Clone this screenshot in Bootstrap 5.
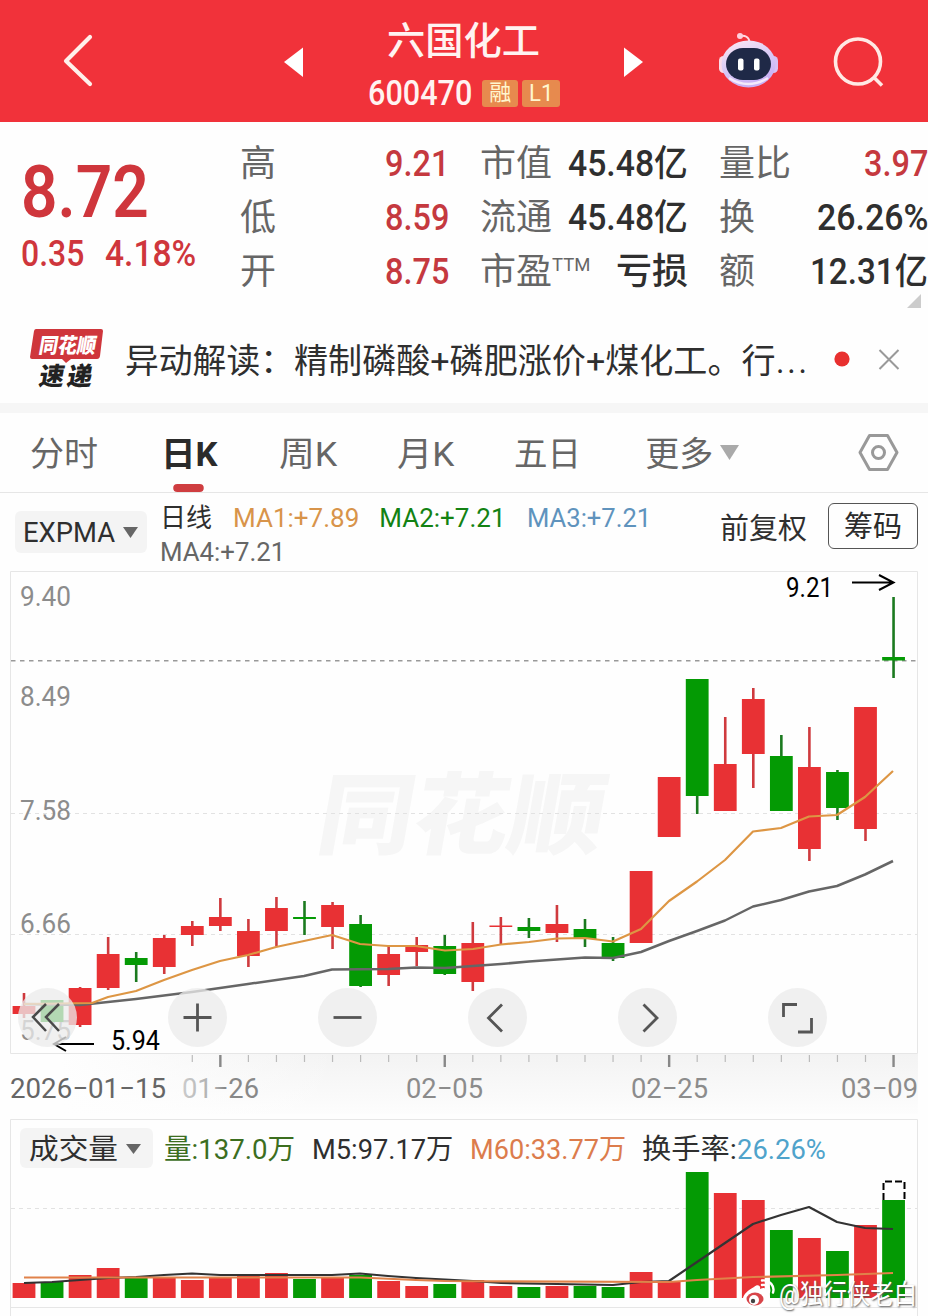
<!DOCTYPE html>
<html lang="zh-CN">
<head>
<meta charset="utf-8">
<meta name="viewport" content="width=device-width, initial-scale=1">
<title>六国化工 600470</title>
<link href="https://cdn.jsdelivr.net/npm/bootstrap@5.3.0/dist/css/bootstrap.min.css" rel="stylesheet">
<style>
body{width:928px;height:1316px;overflow:hidden;background:#fefefe;color:#2f2f2f;font-family:Roboto,"Noto Sans CJK SC",sans-serif;line-height:1}
svg{display:block;flex:none}
[data-w]{display:inline-block;white-space:nowrap;transform-origin:0 50%;flex:none}
.topbar{height:122px;background:#f1323a;color:#fff3f1}
.topbar>*{flex:none}
.ttl{width:250px;padding-top:21px}
.ttl h1{font-size:38px;line-height:40px;font-weight:500;margin:0 0 0 47px}
.code-row{height:30px;margin:17px 0 0 28px}
.code-num{font-size:35px;font-weight:500;margin-right:10px}
.tagbox{background:#e78a4e;color:#fff6cf;height:27px;border-radius:3px;font-size:22px}
.tag-rong{width:36px}
.tag-l1{width:38px;font-size:24px}
.quote{height:185px}
.price-col{width:240px;padding:37px 0 0 21px;color:#cf363c}
.price{font-size:73px;font-weight:600;line-height:66px;height:66px}
.chg{font-size:36.5px;font-weight:500;margin-top:10px;line-height:38px;gap:21px}
.stat{height:54px;line-height:54px;font-size:36px;color:#666}
.stat b{font-weight:500;color:#2f2f2f}
.stat b.up{color:#c5393f}
.s1{width:209px}.s2{width:208px}.s3{width:209px}
.stats{gap:31px;padding-top:15px}
.stat sup{font-size:18.5px;top:-13px;font-weight:400}
.fold{right:7px;bottom:-1px}
.notice{height:96px;padding-left:30px}
.notice .msg{font-size:34px;line-height:96px;margin-left:21px;padding-top:6px}
.notice .dots{letter-spacing:3px}
.sep{height:10px;background:#f6f6f6}
.tabs-row{height:80px;border-bottom:1px solid #e6e6e6;font-size:34px;color:#666;line-height:82px}
.tabs-row>*{flex:none}
.tabs-row .on{color:#2b2b2b;font-weight:700;position:relative;height:79px}
.tabs-row .on::after{content:"";position:absolute;left:12px;bottom:0;width:30px;height:8px;border-radius:4px;background:#cf3d40}
.ind{height:72px}
.drop{background:#f4f4f4;border-radius:6px}
.ind .drop{width:132px;height:42px;margin:18px 0 0 15px;padding:2px 0 0 8px;font-size:28px}
.legend{width:560px;margin-left:13px;font-size:26px;padding-top:8px}
.legend>div{height:34px;line-height:34px}
.m1{color:#d8944a;margin-left:21px}.m2{color:#138213;margin-left:20px}.m3{color:#5f93bd;margin-left:21px}
.adj{font-size:29px;line-height:73px}
.chip{width:90px;height:46px;margin:10px 0 0 21px;padding-top:3px;border:1.5px solid #555;border-radius:6px;font-size:29px;color:#2b2b2b}
.stage{height:751px}
.ctrls{position:absolute;left:18px;top:423px;gap:91px}
.ctrls button{width:59px;height:59px;border:0;border-radius:50%;background:rgba(235,235,235,.76);padding:0}
.volhead{position:absolute;left:20px;top:563px;height:40px;font-size:28px}
.volhead>span{padding-top:3px}
.volhead .drop{width:133px;height:40px;padding:3px 0 0 9px;margin-right:11px}
.wm{position:absolute;left:741px;top:714px;color:#fff;font-size:27px;text-shadow:1px 1px 2px #555}
svg text{font-family:Roboto,"Noto Sans CJK SC",sans-serif}
</style>
</head>
<body>
<header class="topbar d-flex">
  <svg width="270" height="122" fill="none" stroke="#fff0ea" stroke-width="4.2" stroke-linecap="round" stroke-linejoin="round"><path d="M90 37 66 61 90 84"/></svg>
  <svg width="70" height="122"><path d="M14 62 33 47.500V77z" fill="#fff"/></svg>
  <div class="ttl">
    <h1><span data-w="153">六国化工</span></h1>
    <div class="code-row d-flex align-items-center">
      <span class="code-num" data-w="104">600470</span>
      <span class="tagbox tag-rong d-flex align-items-center justify-content-center me-1">融</span>
      <span class="tagbox tag-l1 d-flex align-items-center justify-content-center"><span data-w="24">L1</span></span>
    </div>
  </div>
  <svg width="110" height="122"><path d="M53 62 34 47.500V77z" fill="#fff"/></svg>
  <svg width="110" height="122" viewBox="700 0 110 122">
    <defs><linearGradient id="rb" x1="0" y1="0" x2=".4" y2="1"><stop offset="0" stop-color="#ffe9f3"/><stop offset=".55" stop-color="#d9cbf6"/><stop offset="1" stop-color="#c9b0f5"/></linearGradient></defs>
    <path d="M740 36c5-1 9 1 9.500 6" fill="none" stroke="#ffd9e3" stroke-width="2"/><circle cx="740" cy="36" r="3" fill="#ffcfdc"/>
    <rect x="719" y="56" width="9" height="17" rx="4.500" fill="#fbdbe8"/><rect x="769" y="56" width="9" height="17" rx="4.500" fill="#d9c1f3"/>
    <ellipse cx="748.500" cy="64" rx="27" ry="23.500" fill="url(#rb)"/>
    <path d="M729 78q19 12 39 0" stroke="#f3e9fb" stroke-width="2.500" fill="none"/>
    <rect x="726" y="48" width="45" height="32" rx="17" fill="#1f2947"/>
    <rect x="738" y="58.500" width="5.500" height="12" rx="2" fill="#fff"/><rect x="754" y="58.500" width="5.500" height="12" rx="2" fill="#fff"/>
  </svg>
  <svg width="118" height="122" viewBox="810 0 118 122" fill="none" stroke="#ffe9e4" stroke-width="3.600"><circle cx="858" cy="61.500" r="22.500"/><path d="m873.500 77 8.500 8.500"/></svg>
</header>

<section class="quote d-flex">
  <div class="price-col flex-shrink-0">
    <div class="price"><span data-w="128">8.72</span></div>
    <div class="chg d-flex"><span data-w="63">0.35</span><span data-w="91">4.18%</span></div>
  </div>
  <div class="stats d-flex flex-shrink-0">
    <div class="s1">
      <div class="stat d-flex justify-content-between"><span>高</span><b class="up" data-w="64">9.21</b></div>
      <div class="stat d-flex justify-content-between"><span>低</span><b class="up" data-w="64">8.59</b></div>
      <div class="stat d-flex justify-content-between"><span>开</span><b class="up" data-w="64">8.75</b></div>
    </div>
    <div class="s2">
      <div class="stat d-flex justify-content-between"><span>市值</span><b data-w="120">45.48亿</b></div>
      <div class="stat d-flex justify-content-between"><span>流通</span><b data-w="120">45.48亿</b></div>
      <div class="stat d-flex justify-content-between"><span>市盈<sup data-w="38">TTM</sup></span><b>亏损</b></div>
    </div>
    <div class="s3 position-relative">
      <div class="stat d-flex justify-content-between"><span>量比</span><b class="up" data-w="64">3.97</b></div>
      <div class="stat d-flex justify-content-between"><span>换</span><b data-w="111">26.26%</b></div>
      <div class="stat d-flex justify-content-between"><span>额</span><b data-w="118">12.31亿</b></div>
      <svg class="position-absolute fold" width="14" height="14" viewBox="0 0 14 14"><path d="M14 0v14H0z" fill="#ccc"/></svg>
    </div>
  </div>
</section>

<section class="notice d-flex">
  <svg width="74" height="96" viewBox="30 307 74 96">
    <path d="M36 329h65q2 0 2 2l-3 25q-.5 3-3 3H71l-5 4-4-4H32q-2 0-2-2l4-26q.5-2 2-2z" fill="#cf363c"/>
    <text transform="translate(38 353) skewX(-10)" font-size="21" font-weight="900" fill="#fff" textLength="57" lengthAdjust="spacingAndGlyphs">同花顺</text>
    <text transform="translate(38 385) skewX(-10)" font-size="25" font-weight="900" fill="#222" textLength="53">速递</text>
  </svg>
  <div class="msg d-flex"><span data-w="169">异动解读：</span><span data-w="482">精制磷酸+磷肥涨价+煤化工。行</span><span class="dots" data-w="34">...</span></div>
  <svg width="110" height="96" viewBox="810 307 110 96"><circle cx="842" cy="359" r="7.600" fill="#e8302f"/><path d="m879.500 350 19 19m0-19-19 19" stroke="#999" stroke-width="2"/></svg>
</section>
<div class="sep"></div>

<nav class="tabs-row d-flex">
  <span data-w="68" style="margin-left:30px">分时</span>
  <span class="on" style="margin-left:63px" data-w="57">日K</span>
  <span style="margin-left:61px" data-w="58">周K</span>
  <span style="margin-left:60px" data-w="57">月K</span>
  <span style="margin-left:60px" data-w="67">五日</span>
  <span style="margin-left:64px" data-w="68">更多</span>
  <svg width="206" height="79" viewBox="713 413 206 79"><path d="M720 445h19l-9.500 15z" fill="#aaa"/><g fill="none" stroke="#999" stroke-width="3"><path d="M869.500 435.500h18l9.500 17-9.500 17h-18l-9.500-17z" stroke-linejoin="round"/><circle cx="878.500" cy="452.500" r="6"/></g></svg>
</nav>

<section class="ind d-flex">
  <div class="drop d-flex align-items-center flex-shrink-0"><span data-w="92">EXPMA</span><svg class="ms-2" width="16" height="12"><path d="M0 0h15L7.500 11z" fill="#666"/></svg></div>
  <div class="legend flex-shrink-0">
    <div class="d-flex"><span data-w="52">日线</span><span class="m1" data-w="126">MA1:+7.89</span><span class="m2" data-w="126">MA2:+7.21</span><span class="m3" data-w="124">MA3:+7.21</span></div>
    <div style="color:#666"><span data-w="125">MA4:+7.21</span></div>
  </div>
  <div class="adj"><span data-w="87">前复权</span></div>
  <div class="chip d-flex align-items-center justify-content-center flex-shrink-0">筹码</div>
</section>

<main class="stage position-relative">
  <svg id="chart" width="928" height="751" viewBox="0 565 928 751">
    <defs>
      <linearGradient id="axis" x1="0" y1="0" x2="0" y2="1"><stop offset="0" stop-color="#f3f3f3"/><stop offset="1" stop-color="#fdfdfd"/></linearGradient>
      <linearGradient id="veil"><stop offset="0" stop-color="#fefefe"/><stop offset="1" stop-color="#fefefe" stop-opacity="0"/></linearGradient>
      <linearGradient id="fade"><stop offset="0" stop-color="#ccc"/><stop offset=".45" stop-color="#aaa"/><stop offset=".55" stop-color="#888"/></linearGradient>
    </defs>
    <rect x="60" y="1054" width="858" height="60" fill="url(#axis)"/>
    <rect x="60" y="1054" width="280" height="60" fill="url(#veil)"/>
    <path d="M10.500 1053.500v-482h907v482zM10.500 1316V1119.500h907V1316M10.500 1307.500h907" fill="none" stroke="#e6e6e6"/>
    <text transform="translate(314 847) skewX(-10)" font-size="89" font-weight="900" fill="#f6f6f6" textLength="286" lengthAdjust="spacingAndGlyphs">同花顺</text>
    <path d="M11 813.500h906M11 934.500h906M11 1208.500h906" stroke="#e2e2e2" stroke-dasharray="4 4"/>
    <path d="M11 660.800h906" stroke="#999" stroke-width="1.500" stroke-dasharray="4.500 4.500"/>
    <g font-size="28" fill="#8c8c8c">
      <text x="20" y="606" textLength="51" lengthAdjust="spacingAndGlyphs">9.40</text>
      <text x="20" y="706" textLength="51" lengthAdjust="spacingAndGlyphs">8.49</text>
      <text x="20" y="820" textLength="51" lengthAdjust="spacingAndGlyphs">7.58</text>
      <text x="20" y="933" textLength="51" lengthAdjust="spacingAndGlyphs">6.66</text>
      <text x="20" y="1040" textLength="51" lengthAdjust="spacingAndGlyphs">5.75</text>
      <text x="406" y="1097.500" textLength="77" lengthAdjust="spacingAndGlyphs">02−05</text>
      <text x="631" y="1097.500" textLength="77" lengthAdjust="spacingAndGlyphs">02−25</text>
      <text x="841" y="1097.500" textLength="77" lengthAdjust="spacingAndGlyphs">03−09</text>
      <text x="182" y="1097.500" textLength="77" lengthAdjust="spacingAndGlyphs" fill="url(#fade)">01−26</text>
      <text x="10" y="1097.500" textLength="156" lengthAdjust="spacingAndGlyphs" fill="#666">2026−01−15</text>
    </g>
    <g id="bars"></g>
    <g fill="none" stroke-width="2.200" stroke-linejoin="round">
      <path stroke="#666" stroke-width="2.500" d="M24 1004 80 1005 136 999 192 992 248 984 304 976 332 969.500 388 969 416 967.500 445 968 473 966 501 964 529 961.500 585 957.500 613 958 641 952 669 941 697 931 725 920.500 753 906.500 781 900 809 891.500 837 886 865 874.500 893 861"/>
      <path stroke="#dd9644" d="M24 1004 92 1003 108 997 136 991 164 980 192 970 220 961 248 955 276 947 304 941 332 935 360 944 388 946 416 946 445 950.500 473 949 501 944.500 529 942 557 938.500 585 938 613 941.500 641 929 669 901 697 881.500 725 860 753 831.500 781 828 809 816.500 837 815 865 797 893 771"/>
      <path stroke="#333" d="M24 1283 52 1282 80 1280 108 1278 136 1277 164 1275 192 1273.500 220 1275 276 1275 332 1275 360 1273.500 388 1276 416 1278 445 1279.500 473 1281 501 1283 557 1284 613 1285 641 1282 669 1281 697 1262 725 1243 753 1224 781 1215 809 1207 837 1222 865 1228 893 1229"/>
      <path stroke="#e0824a" d="M24 1277.500H360L416 1280 445 1281 669 1282 697 1280 753 1277 837 1275 893 1273"/>
    </g>
    <path d="M852 582.500h41M879 575l14.500 7.500L879 590M94 1044H54M66 1037l-12 7 12 7" fill="none" stroke="#000" stroke-width="2"/>
    <g font-size="27" fill="#000"><text x="786" y="597" textLength="47" lengthAdjust="spacingAndGlyphs">9.21</text><text x="111" y="1050" textLength="49" lengthAdjust="spacingAndGlyphs">5.94</text></g>
    <path d="M883.500 1200v-18.500h21V1200" fill="none" stroke="#000" stroke-width="2" stroke-dasharray="7 3"/>
  </svg>

  <div class="ctrls d-flex">
    <button><svg width="59" height="59" fill="none" stroke="#4a4a4a" stroke-width="2.500"><path d="M28 16 15 29 28 43M41 16 28 29 41 43"/></svg></button>
    <button><svg width="59" height="59" stroke="#555" stroke-width="2.800"><path d="M15.500 29.500h28M29.500 15.500v28"/></svg></button>
    <button><svg width="59" height="59" stroke="#555" stroke-width="2.800"><path d="M15.500 29.500h28"/></svg></button>
    <button><svg width="59" height="59" fill="none" stroke="#555" stroke-width="2.800"><path d="M34 16.500 20.500 30 34 43.500"/></svg></button>
    <button><svg width="59" height="59" fill="none" stroke="#555" stroke-width="2.800"><path d="M25.500 16.500 39 30 25.500 43.500"/></svg></button>
    <button><svg width="59" height="59" fill="none" stroke="#555" stroke-width="2.800"><path d="M29 16.500H15.500V29M43.500 30v14H30"/></svg></button>
  </div>

  <div class="volhead d-flex align-items-center">
    <div class="drop d-flex align-items-center"><span data-w="89">成交量</span><svg style="margin-left:8px" width="16" height="11"><path d="M0 0h15L7.500 10z" fill="#666"/></svg></div>
    <span data-w="131" style="color:#3c6e1f">量:137.0万</span>
    <span data-w="141" style="margin-left:17px">M5:97.17万</span>
    <span data-w="156" style="color:#dc7c4c;margin-left:17px">M60:33.77万</span>
    <span data-w="95" style="margin-left:16px">换手率:</span><span data-w="89" style="color:#4fa3cb">26.26%</span>
  </div>

  <div class="wm d-flex align-items-center">
    <svg width="34" height="32" viewBox="0 0 34 32"><path d="M13 8c3-3 7-2 6 2 4-2 7-1 6 3 8 4 4 15-9 16C6 30 0 25 2 19c1-4 5-8 11-11z" fill="#fff"/><ellipse cx="14" cy="20" rx="8.500" ry="6.500" fill="#d8454a"/><circle cx="13" cy="21" r="5" fill="#fff"/><circle cx="12" cy="22" r="2.200" fill="#444"/><path d="M21 6c5-1 8 3 7 7M21 1.500c8-1 13 6 11 12" fill="none" stroke="#fff" stroke-width="2.400" stroke-linecap="round"/></svg>
    <span class="ms-1" data-w="138">@独行侠老白</span>
  </div>
</main>

<script src="https://cdn.jsdelivr.net/npm/bootstrap@5.3.0/dist/js/bootstrap.bundle.min.js"></script>
<script>
// One row per trading day: colour, body top, body bottom, wick top, wick bottom, volume bar top
const days=[
['r',1006,1014,993,1018,1283],['g',1000,1022,1000,1022,1282],['r',988,1025,987,1027,1275],['r',954,988,937,990,1268],
['g',958,965,952,982,1278],['r',938,967,935,974,1278],['r',926,935,921,946,1280],['r',917,926,898,931,1278],
['r',931,956,919,967,1274],['r',908,931,897,946,1273],['g',917,919,901,935,1279],['r',905,927,902,949,1278],
['g',924,986,915,987,1275],['r',954,975,946,986,1281],['r',945,952,937,966,1286],['g',946,974,935,975,1284],
['r',943,982,922,991,1280],['r',925.5,927,917,944,1286],['g',927,931,918,938,1287],['r',924,933,905,942,1286],
['g',929,939,919,947,1286],['g',943,958,937,961,1287],['r',871,943,871,943,1272],['r',777,837,777,837,1282],
['g',679,796,679,814,1172],['r',764,811,717,811,1193],['r',699,754,688,788,1200],['g',756,811,735,811,1230],
['r',767,849,727,861,1238],['g',772,808,770,820,1251],['r',707,829,707,841,1225],['g',657,660.5,597,678,1200]];
let out='';
days.forEach((d,i)=>{
  const x=24+28.05*i,c=d[0]=='r'?'#e83134':'#049a04',w=d[0]=='r'?'#cf3a3e':'#1b7a1f';
  out+=`<path d="M${x} ${d[3]}V${d[4]}" stroke="${w}" stroke-width="2.6"/>`+
    `<rect x="${x-11.4}" y="${d[1]}" width="22.8" height="${d[2]-d[1]}" fill="${c}"/>`+
    `<rect x="${x-11.4}" y="${d[5]}" width="22.8" height="${1298-d[5]}" fill="${c}"/>`;
  if(i>5){const big=[7,15,23,31].includes(i);
    out+=`<path d="M${x} 1055v${big?12:7}" stroke="${big?'#888':'#bbb'}" stroke-width="${big?2.4:1.2}"/>`;}
});
document.getElementById('bars').innerHTML=out;
// Condense each label to its column width
document.querySelectorAll('[data-w]').forEach(e=>{
  const n=e.offsetWidth,w=+e.dataset.w;
  e.style.transform=`scaleX(${w/n})`;
  e.style.marginRight=(parseFloat(getComputedStyle(e).marginRight)+w-n)+'px';
});
</script>
</body>
</html>
